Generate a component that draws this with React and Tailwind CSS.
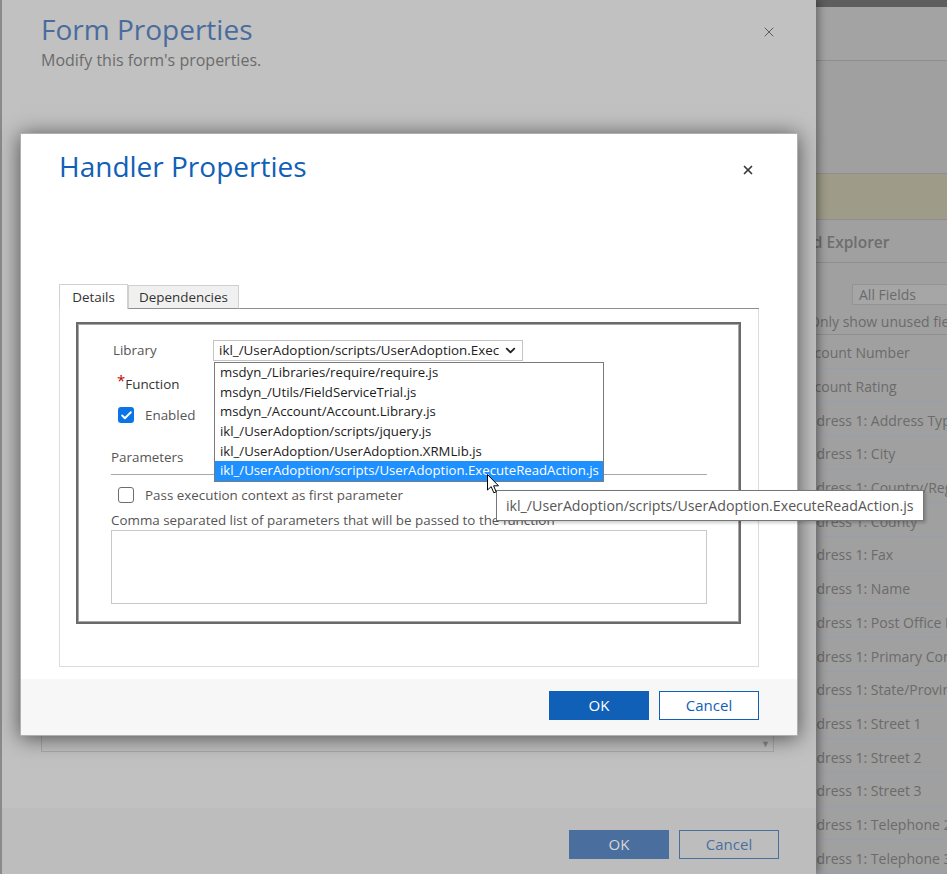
import { ChevronDown, Check, X } from "lucide-react";

const fields = [
  "Account Number",
  "Account Rating",
  "Address 1: Address Type",
  "Address 1: City",
  "Address 1: Country/Region",
  "Address 1: County",
  "Address 1: Fax",
  "Address 1: Name",
  "Address 1: Post Office Box",
  "Address 1: Primary Contact Name",
  "Address 1: State/Province",
  "Address 1: Street 1",
  "Address 1: Street 2",
  "Address 1: Street 3",
  "Address 1: Telephone 2",
  "Address 1: Telephone 3",
];

const libraries = [
  "msdyn_/Libraries/require/require.js",
  "msdyn_/Utils/FieldServiceTrial.js",
  "msdyn_/Account/Account.Library.js",
  "ikl_/UserAdoption/scripts/jquery.js",
  "ikl_/UserAdoption/UserAdoption.XRMLib.js",
  "ikl_/UserAdoption/scripts/UserAdoption.ExecuteReadAction.js",
];

const selected = libraries[5];

function FieldExplorer() {
  return (
    <div className="flex-1 flex flex-col min-w-0 text-[#6b6b6b] text-[14px]">
      <div className="h-[7px] bg-[#5e5e5e]" />
      <div className="h-[55px] bg-[#a3a3a3] border-b border-[#8e8e8e]" />
      <div className="h-[114px] bg-[#a0a0a0] border-b border-[#8e8e8e]" />
      <div className="h-[47px] bg-[#9e9c88] border-b border-[#8e8e8e]" />
      <div className="h-[43px] flex items-center pl-[7px] pt-[4px] text-[15.5px] font-semibold text-[#6e6e6e] whitespace-nowrap border-b border-[#8e8e8e]">
        Field Explorer
      </div>
      <div className="h-[73px] border-b border-[#8e8e8e] flex flex-col">
        <div className="mt-[21px] ml-[72px] -mr-[20px] h-[21px] border border-[#939393] bg-[#a6a6a6] flex items-center pl-[6px] pt-[1px] whitespace-nowrap">
          All Fields
        </div>
        <div className="mt-[7px] h-[20px] flex items-center pl-[29px] whitespace-nowrap">
          Only show unused fields
        </div>
      </div>
      {fields.map((f) => (
        <div
          key={f}
          className="h-[33.7px] shrink-0 flex items-center pl-[19px] pt-[3px] whitespace-nowrap border-b border-[#97a0aa]"
        >
          {f}
        </div>
      ))}
    </div>
  );
}

function FormProperties() {
  return (
    <div className="absolute left-0 top-0 w-[816px] h-full bg-[#c1c1c1] border-l-2 border-[#8a8a8a] shadow-[3px_0_8px_rgba(0,0,0,0.35)] flex flex-col">
      <div className="flex justify-between pl-[39px] pr-[39px] pt-[9px]">
        <div>
          <div className="text-[28px] leading-[40px] text-[#4a6c9c]">Form Properties</div>
          <div className="text-[16px] leading-[22px] text-[#6b6b6b]">Modify this form's properties.</div>
        </div>
        <X size={16} strokeWidth={1.5} className="mt-[15px] text-[#5c5c5c]" />
      </div>
      <div className="flex-1 flex flex-col pl-[39px] pr-[42px]">
        <div className="relative mt-auto mb-[56px] h-[200px] border border-[#a9a9a9]">
          <span className="absolute right-[3px] bottom-[3px] text-[9px] leading-none text-[#8a8a8a]">▼</span>
        </div>
      </div>
      <div className="h-[66px] bg-[#bdbdbd] flex justify-end gap-[10px] pt-[22px] pr-[37px] text-[15px]">
        <div className="w-[100px] h-[29px] bg-[#4a6f9f] text-[#d6d6d6] flex items-center justify-center">OK</div>
        <div className="w-[100px] h-[29px] border border-[#4a6f9f] text-[#4a6f9f] flex items-center justify-center">Cancel</div>
      </div>
    </div>
  );
}

function Cursor() {
  return (
    <svg
      className="absolute left-[466px] top-[340px] z-30"
      width="13"
      height="20"
      viewBox="0 0 13 20"
    >
      <path
        d="M0.5 0.5 L0.5 16 L4.2 12.6 L6.8 18.8 L9.2 17.8 L6.6 11.8 L11.5 11.8 Z"
        fill="white"
        stroke="black"
        strokeWidth="1"
        strokeLinejoin="round"
      />
    </svg>
  );
}

function HandlerProperties() {
  return (
    <div className="absolute left-[20px] top-[133px] w-[778px] h-[603px] bg-white border border-[#b0b0b0] shadow-[0_2px_20px_rgba(0,0,0,0.6)] flex flex-col text-[#333]">
      <div className="flex justify-between pl-[38px] pr-[42px] pt-[12px]">
        <div className="text-[28px] leading-[40px] text-[#1160b7]">Handler Properties</div>
        <X size={14} strokeWidth={3} className="mt-[17px] text-[#3c3c3c]" />
      </div>

      <div className="ml-[38px] w-[700px] mt-[98px]">
        <div className="flex items-end h-[25px]">
          <div className="h-[25px] w-[69px] bg-white border border-b-0 border-[#d2d2d2] flex items-center justify-center">
            Details
          </div>
          <div className="h-[24px] w-[111px] bg-[#f0f0f0] border border-[#cfcfcf] border-b-[#8f8f8f] flex items-center justify-center">
            Dependencies
          </div>
          <div className="flex-1 border-b border-[#8f8f8f]" />
        </div>
        <div className="h-[358px] border border-t-0 border-[#dcdcdc] pt-[13px] pl-[16px]">
          <div className="w-[665px] h-[302px] border-2 border-[#6a6a6a] shadow-[inset_0_0_0_1px_#a8a8a8] pl-[33px] pr-[32px] pt-[16px] text-[#555]">
            <div className="flex items-center h-[21px]">
              <span className="w-[102px] pl-[2px]">Library</span>
              <div className="relative w-[310px] h-[21px] border border-[#c4c4c4] flex items-center pl-[5px] pr-[4px] text-[#222]">
                <span className="flex-1 overflow-hidden whitespace-nowrap">{selected}</span>
                <ChevronDown size={15} strokeWidth={3} className="ml-[4px] text-[#222]" />
                <div className="absolute left-0 top-[21px] w-[390px] border border-[#7a7a7a] bg-white z-10 text-[13.2px]">
                  {libraries.map((l) => (
                    <div
                      key={l}
                      className={
                        l === selected
                          ? "h-[19.7px] leading-[19.7px] pl-[5px] whitespace-nowrap bg-[#1e90ff] text-white"
                          : "h-[19.7px] leading-[19.7px] pl-[5px] whitespace-nowrap text-[#1b1b1b]"
                      }
                    >
                      {l}
                    </div>
                  ))}
                </div>
              </div>
            </div>
            <div className="mt-[12px] h-[22px] flex items-center pl-[6px] text-[#333]">
              <span className="self-start text-[#c40000] text-[15px] leading-[15px]">*</span>
              <span>Function</span>
            </div>
            <div className="mt-[11px] h-[18px] flex items-center pl-[7px] gap-[11px]">
              <span className="w-[16px] h-[16px] rounded-[3px] bg-[#0b75e8] flex items-center justify-center">
                <Check size={13} strokeWidth={3.5} className="text-white" />
              </span>
              <span>Enabled</span>
            </div>
            <div className="mt-[23px] h-[20px] flex items-center">Parameters</div>
            <div className="mt-[7px] border-t border-[#a9a9a9]" />
            <div className="mt-[12px] h-[16px] flex items-center pl-[7px] gap-[11px]">
              <span className="w-[16px] h-[16px] rounded-[3px] border border-[#6d6d6d] bg-white" />
              <span>Pass execution context as first parameter</span>
            </div>
            <div className="mt-[7px] h-[20px] flex items-center whitespace-nowrap">
              Comma separated list of parameters that will be passed to the function
            </div>
            <div className="h-[74px] border border-[#c8c8c8]" />
          </div>
        </div>
      </div>

      <div className="mt-auto h-[56px] bg-[#f7f7f7] flex justify-end gap-[10px] pt-[12px] pr-[38px] text-[15px]">
        <div className="w-[100px] h-[29px] bg-[#1160b7] text-white flex items-center justify-center">OK</div>
        <div className="w-[100px] h-[29px] border border-[#1160b7] bg-white text-[#1160b7] flex items-center justify-center">
          Cancel
        </div>
      </div>

      <div className="absolute left-[475px] top-[356px] w-[428px] h-[31px] border border-[#767676] bg-white text-[#575757] text-[14.2px] pl-[9px] flex items-center whitespace-nowrap shadow-[2px_2px_3px_rgba(0,0,0,0.2)] z-20">
        {selected}
      </div>
      <Cursor />
    </div>
  );
}

export default function App() {
  return (
    <div className="relative w-[947px] h-[874px] overflow-hidden bg-[#a0a0a0] font-['Open_Sans',sans-serif] text-[13.4px]">
      <div className="flex h-full">
        <div className="w-[780px] shrink-0" />
        <FieldExplorer />
      </div>
      <FormProperties />
      <HandlerProperties />
    </div>
  );
}
